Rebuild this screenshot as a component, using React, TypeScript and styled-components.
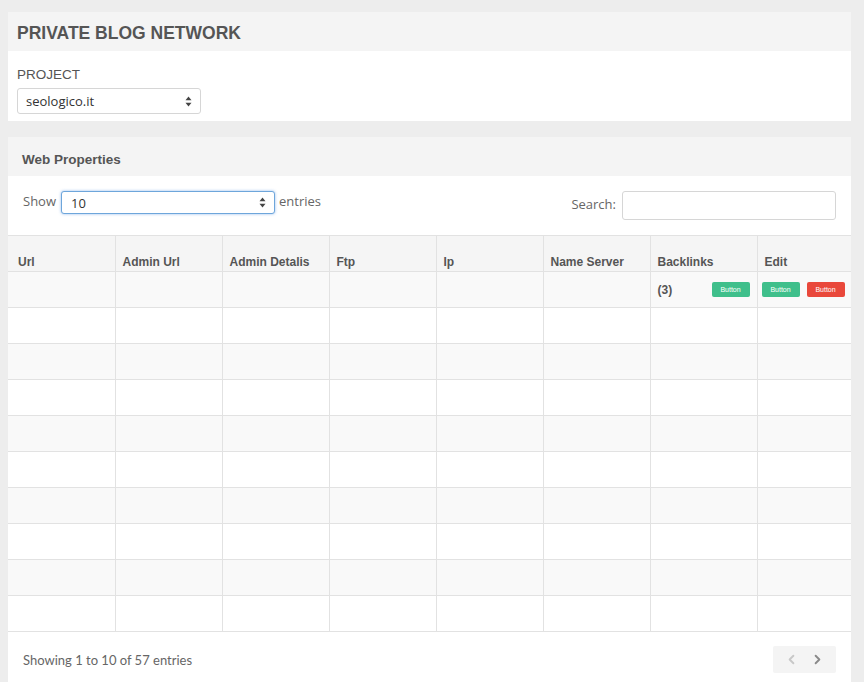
import React from "react";
import styled, { createGlobalStyle } from "styled-components";
import { ChevronLeft, ChevronRight } from "lucide-react";

const GlobalStyle = createGlobalStyle`
  html, body {
    margin: 0;
    padding: 0;
    background: #ededed;
  }
  * {
    box-sizing: border-box;
  }
`;

const Page = styled.div`
  display: flex;
  flex-direction: column;
  gap: 16px;
  padding: 12px 13px 0 8px;
  height: 682px;
  overflow: hidden;
`;

const Panel = styled.div<{ $grow?: boolean }>`
  background: #ffffff;
  display: flex;
  flex-direction: column;
  flex: ${(p) => (p.$grow ? "1 0 auto" : "0 0 auto")};
`;

const PanelHeader = styled.div<{ $small?: boolean }>`
  height: 39px;
  display: flex;
  align-items: center;
  padding-left: ${(p) => (p.$small ? "14px" : "9px")};
  background: #f4f4f4;
  color: #555;
  font-family: "Liberation Sans", Arial, sans-serif;
  font-weight: bold;
  font-size: ${(p) => (p.$small ? "13.5px" : "17.5px")};
  padding-top: ${(p) => (p.$small ? "5px" : "4px")};
`;

const ProjectBody = styled.div`
  display: flex;
  flex-direction: column;
  align-items: flex-start;
  gap: 5px;
  padding: 15px 9px 7px;
`;

const Label = styled.div`
  font-family: "Liberation Sans", Arial, sans-serif;
  font-size: 13.5px;
  line-height: 16px;
  color: #555;
  padding-top: 1px;
`;

const SelectBox = styled.div<{ $focus?: boolean; $w: number; $h: number }>`
  width: ${(p) => p.$w}px;
  height: ${(p) => p.$h}px;
  display: flex;
  align-items: center;
  justify-content: space-between;
  padding: 0 8px 0 ${(p) => (p.$focus ? "9px" : "8px")};
  background: #fff;
  border: 1px solid ${(p) => (p.$focus ? "#6ea6db" : "#d6d6d6")};
  border-radius: 3px;
  box-shadow: ${(p) => (p.$focus ? "0 0 3px rgba(102,160,230,0.7)" : "none")};
  font-family: "Open Sans", sans-serif;
  font-size: 13px;
  color: #333;
`;

const Controls = styled.div`
  display: flex;
  align-items: flex-start;
  justify-content: space-between;
  padding: 15px 15px 15px 15px;
`;

const ControlGroup = styled.div`
  display: flex;
  align-items: center;
  gap: 6px;
  font-family: "Open Sans", sans-serif;
  font-size: 13px;
  color: #666;
  & > span {
    margin-top: -3px;
  }
`;

const ShowGroup = styled(ControlGroup)`
  gap: 4px;
  & > span:first-child {
    margin-right: 1px;
  }
`;

const SearchInput = styled.div`
  width: 214px;
  height: 29px;
  border: 1px solid #d6d6d6;
  border-radius: 3px;
  background: #fff;
`;

const Table = styled.table`
  width: 100%;
  border-collapse: collapse;
  table-layout: fixed;
`;

const Th = styled.th<{ $w?: number }>`
  width: ${(p) => (p.$w ? `${p.$w}px` : "auto")};
  height: 36px;
  padding: 0 7px 2px;
  vertical-align: bottom;
  text-align: left;
  background: #f5f5f5;
  color: #555;
  font-family: "Liberation Sans", Arial, sans-serif;
  font-size: 12px;
  font-weight: bold;
  border-top: 1px solid #e2e2e2;
  border-bottom: 1px solid #e2e2e2;
  border-left: 1px solid #e2e2e2;
  &:first-child {
    border-left: none;
    padding-left: 10px;
  }
`;

const Tr = styled.tr<{ $shade: boolean }>`
  background: ${(p) => (p.$shade ? "#f9f9f9" : "#ffffff")};
`;

const Td = styled.td`
  height: 36px;
  padding: 0 7px;
  border-bottom: 1px solid #e2e2e2;
  border-left: 1px solid #e2e2e2;
  &:first-child {
    border-left: none;
  }
`;

const CellRow = styled.div`
  display: flex;
  align-items: center;
  justify-content: space-between;
  gap: 7px;
`;

const EditRow = styled(CellRow)`
  justify-content: flex-start;
  margin-left: -3px;
`;

const Count = styled.span`
  font-family: "Liberation Sans", Arial, sans-serif;
  font-weight: bold;
  font-size: 12px;
  color: #555;
`;

const MiniButton = styled.span<{ $danger?: boolean }>`
  display: inline-flex;
  flex: 0 0 auto;
  align-items: center;
  justify-content: center;
  width: 38px;
  height: 15px;
  border-radius: 2px;
  background: ${(p) => (p.$danger ? "#e9483b" : "#3fbf8b")};
  color: #fff;
  font-family: "Liberation Sans", Arial, sans-serif;
  font-size: 7px;
`;

const Footer = styled.div`
  display: flex;
  align-items: center;
  justify-content: space-between;
  padding: 14px 15px 0 15px;
`;

const Info = styled.div`
  font-family: "Lato", sans-serif;
  font-size: 13px;
  color: #666;
  padding-top: 1px;
`;

const Pager = styled.div`
  width: 63px;
  height: 27px;
  display: flex;
  align-items: center;
  justify-content: space-around;
  padding: 0 6px;
  background: #f4f4f4;
  border-radius: 2px;
`;

const Arrows = () => (
  <svg width="7" height="11" viewBox="0 0 7 11">
    <path d="M3.5 0.5 L6.5 4.2 L0.5 4.2 Z" fill="#444" />
    <path d="M3.5 10.5 L6.5 6.8 L0.5 6.8 Z" fill="#444" />
  </svg>
);

const columns = ["Url", "Admin Url", "Admin Detalis", "Ftp", "Ip", "Name Server", "Backlinks", "Edit"];

export default function App() {
  const rows = Array.from({ length: 10 }, (_, i) => i);
  return (
    <>
      <GlobalStyle />
      <Page>
        <Panel>
          <PanelHeader>PRIVATE BLOG NETWORK</PanelHeader>
          <ProjectBody>
            <Label>PROJECT</Label>
            <SelectBox $w={184} $h={26}>
              <span>seologico.it</span>
              <Arrows />
            </SelectBox>
          </ProjectBody>
        </Panel>

        <Panel $grow>
          <PanelHeader $small>Web Properties</PanelHeader>
          <Controls>
            <ShowGroup>
              <span>Show</span>
              <SelectBox $focus $w={214} $h={23}>
                <span>10</span>
                <Arrows />
              </SelectBox>
              <span>entries</span>
            </ShowGroup>
            <ControlGroup>
              <span>Search:</span>
              <SearchInput />
            </ControlGroup>
          </Controls>

          <Table>
            <thead>
              <tr>
                {columns.map((c, i) => (
                  <Th key={c} $w={i < 7 ? 107 : undefined}>
                    {c}
                  </Th>
                ))}
              </tr>
            </thead>
            <tbody>
              {rows.map((r) => (
                <Tr key={r} $shade={r % 2 === 0}>
                  {columns.map((c) => (
                    <Td key={c}>
                      {r === 0 && c === "Backlinks" && (
                        <CellRow>
                          <Count>(3)</Count>
                          <MiniButton>Button</MiniButton>
                        </CellRow>
                      )}
                      {r === 0 && c === "Edit" && (
                        <EditRow>
                          <MiniButton>Button</MiniButton>
                          <MiniButton $danger>Button</MiniButton>
                        </EditRow>
                      )}
                    </Td>
                  ))}
                </Tr>
              ))}
            </tbody>
          </Table>

          <Footer>
            <Info>Showing 1 to 10 of 57 entries</Info>
            <Pager>
              <ChevronLeft size={15} strokeWidth={3} color="#c8c8c8" />
              <ChevronRight size={15} strokeWidth={3} color="#8a8a8a" />
            </Pager>
          </Footer>
        </Panel>
      </Page>
    </>
  );
}
